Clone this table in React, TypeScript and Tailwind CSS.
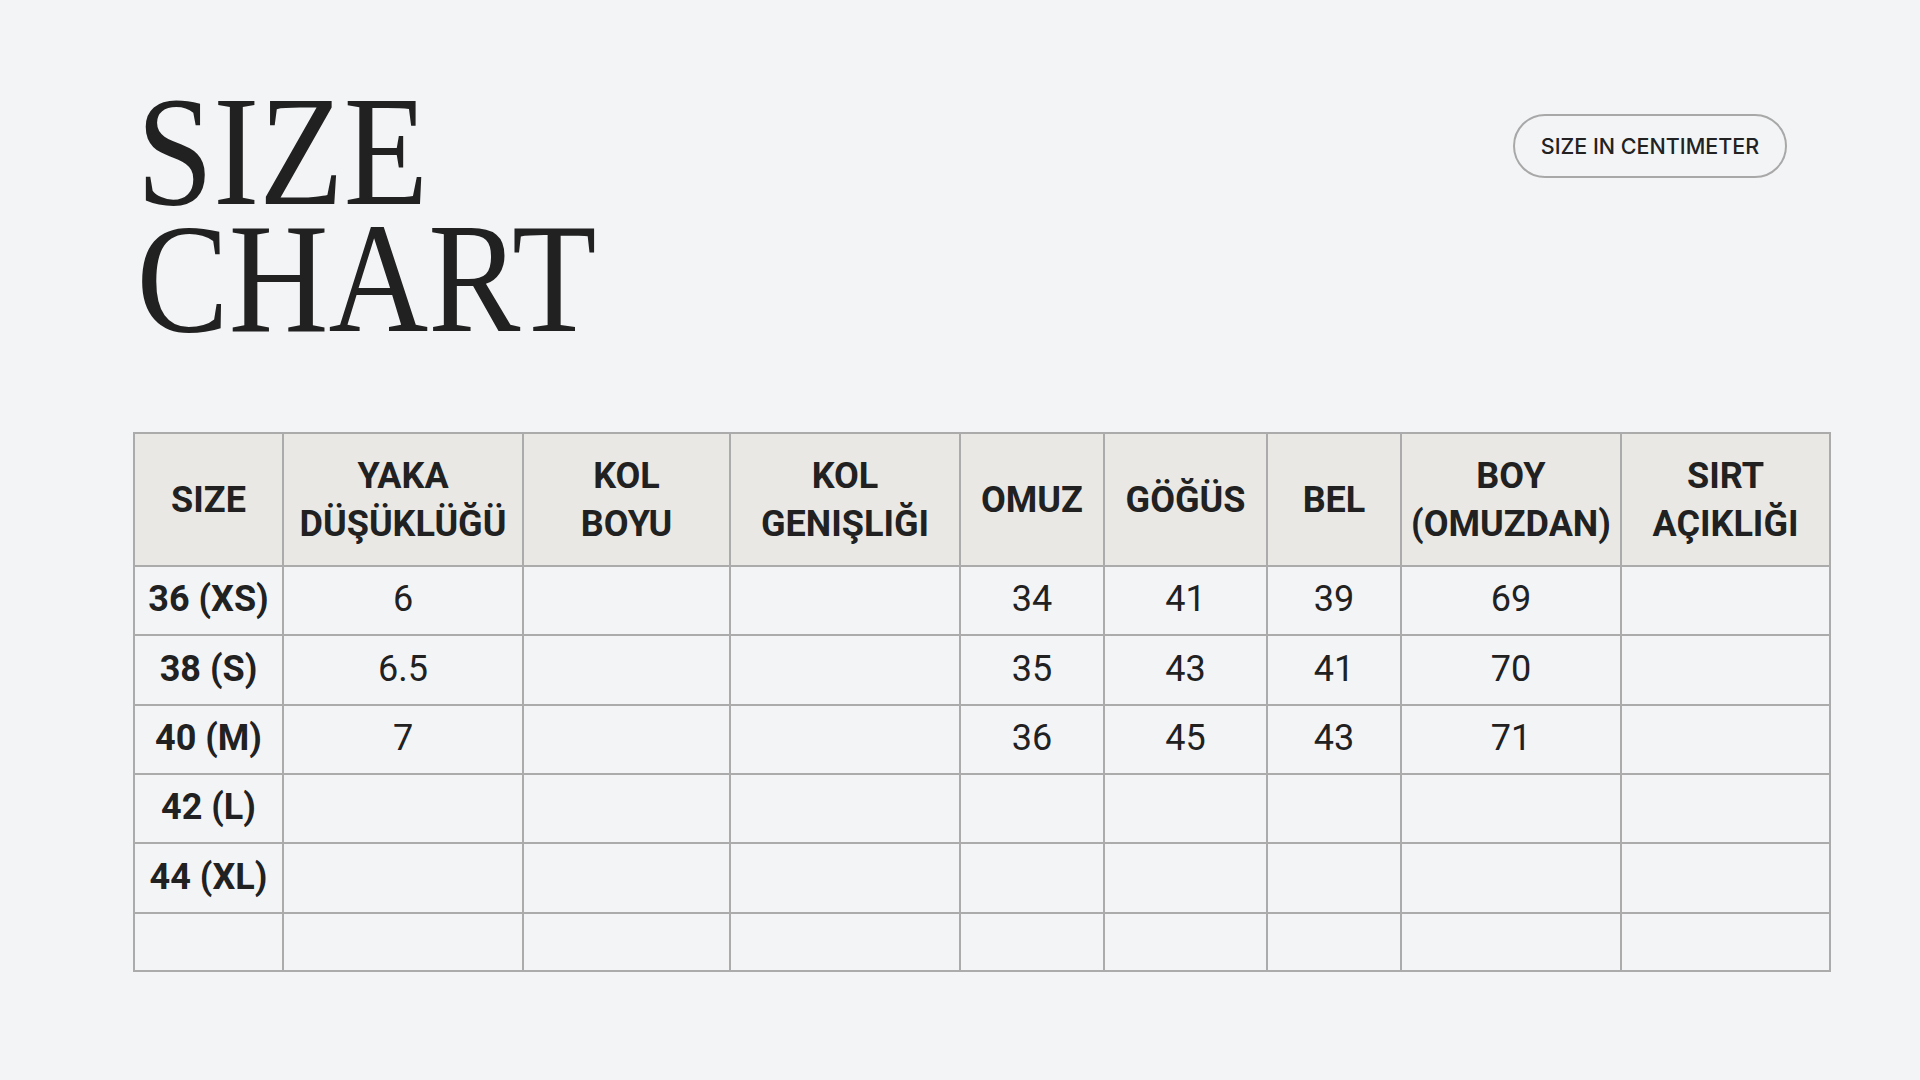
const columns = [
  { w: "w-[149px]", label: ["SIZE"] },
  { w: "w-[240px]", label: ["YAKA", "DÜŞÜKLÜĞÜ"] },
  { w: "w-[207px]", label: ["KOL", "BOYU"] },
  { w: "w-[230px]", label: ["KOL", "GENIŞLIĞI"] },
  { w: "w-[144px]", label: ["OMUZ"] },
  { w: "w-[163px]", label: ["GÖĞÜS"] },
  { w: "w-[134px]", label: ["BEL"] },
  { w: "w-[220px]", label: ["BOY", "(OMUZDAN)"] },
  { w: "w-[209px]", label: ["SIRT", "AÇIKLIĞI"] },
]

const rows = [
  { h: "h-[69px]", cells: ["36 (XS)", "6", "", "", "34", "41", "39", "69", ""] },
  { h: "h-[70px]", cells: ["38 (S)", "6.5", "", "", "35", "43", "41", "70", ""] },
  { h: "h-[69px]", cells: ["40 (M)", "7", "", "", "36", "45", "43", "71", ""] },
  { h: "h-[69px]", cells: ["42 (L)", "", "", "", "", "", "", "", ""] },
  { h: "h-[70px]", cells: ["44 (XL)", "", "", "", "", "", "", "", ""] },
  { h: "h-[58px]", cells: ["", "", "", "", "", "", "", "", ""] },
]

export default function App() {
  return (
    <div className="w-[1920px] h-[1080px] bg-[#f3f4f6] text-[#212121] overflow-hidden">
      <div className="flex justify-between items-start pl-[133px] pr-[133px] pt-[88px]">
        {/* Title */}
        <h1 className="font-['Liberation_Serif',serif] text-[157px] leading-[127px] font-normal origin-left scale-x-[0.88] pl-[4px]">
          <div>SIZE</div>
          <div>CHART</div>
        </h1>

        <div className="mt-[26px] w-[274px] h-[64px] rounded-full border-2 border-[#a8a8a8] flex items-center justify-center font-['Inter',sans-serif] text-[21.5px] font-medium text-[#222]">
          SIZE IN CENTIMETER
        </div>
      </div>

      <div className="pl-[133px] pt-[90px]">
        <table className="border-collapse table-fixed w-[1696px] font-['Roboto',sans-serif] text-[36px] text-center">
          <colgroup>
            {columns.map((c, i) => (
              <col key={i} className={c.w} />
            ))}
          </colgroup>
          <thead>
            <tr className="h-[133px] bg-[#e9e8e4]">
              {columns.map((c, i) => (
                <th key={i} className="border-2 border-[#ababab] p-0 font-bold leading-[48px] align-middle">
                  {c.label.map((l, j) => (
                    <div key={j}>{l}</div>
                  ))}
                </th>
              ))}
            </tr>
          </thead>
          <tbody>
            {rows.map((r, i) => (
              <tr key={i} className={r.h}>
                {r.cells.map((v, j) => (
                  <td
                    key={j}
                    className={
                      j === 0
                        ? "border-2 border-[#ababab] p-0 pb-[3px] font-bold leading-none align-middle"
                        : "border-2 border-[#ababab] p-0 pb-[3px] font-normal leading-none align-middle"
                    }
                  >
                    {v}
                  </td>
                ))}
              </tr>
            ))}
          </tbody>
        </table>
      </div>
    </div>
  )
}
